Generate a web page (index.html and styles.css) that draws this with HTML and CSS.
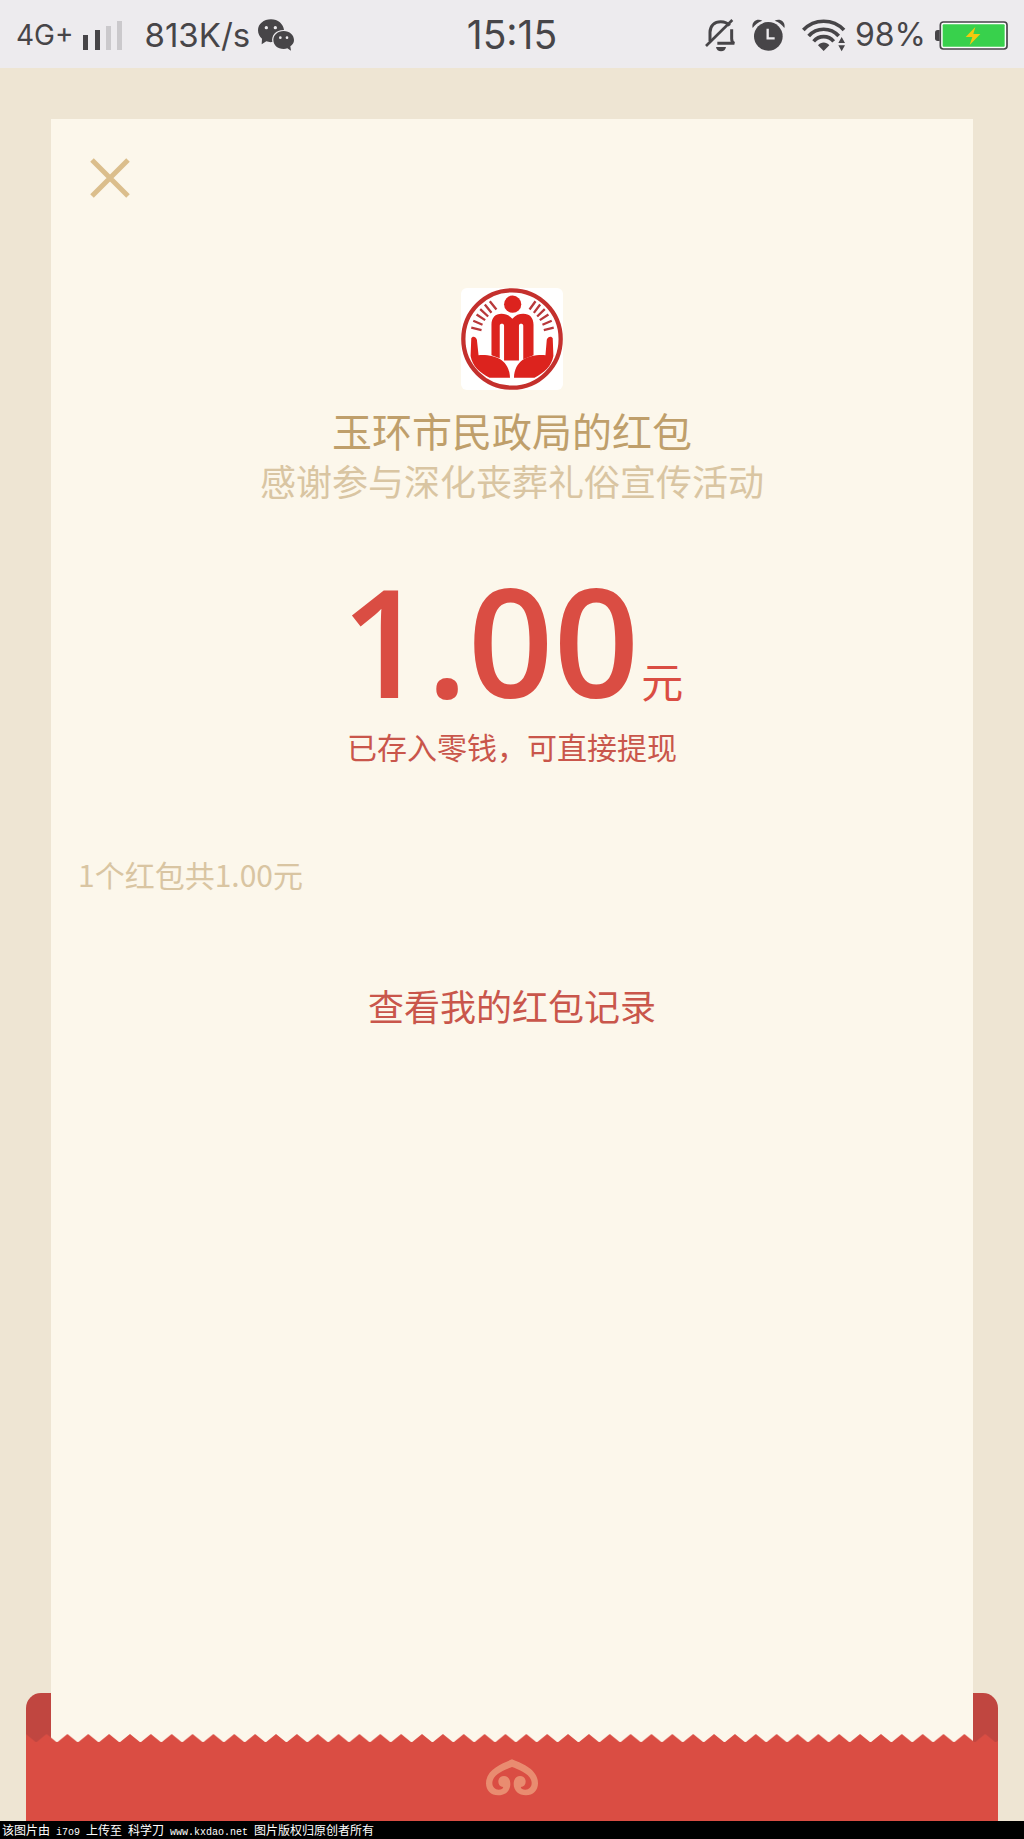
FILE: index.html
```html
<!DOCTYPE html>
<html lang="zh-CN">
<head>
    <meta charset="UTF-8">
    <meta name="viewport" content="width=device-width, initial-scale=1.0">
    <title>红包详情</title>
    <link rel="stylesheet" href="styles.css">
</head>
<body>
    <!-- Status bar -->
    <header class="status-bar">
        <div class="status-left">
            <span class="network">4G+</span>
            <svg class="signal" width="40" height="29" viewBox="0 0 40 29" aria-hidden="true">
                <path fill="#474548" d="M0 14h5v15H0zM12 9h5v20h-5z"/>
                <path fill="#cbc9cc" d="M23 5h5v24h-5zM34 0h5v29h-5z"/>
            </svg>
            <span class="speed">813K/s</span>
            <svg class="wechat" width="36" height="32" viewBox="0 0 108 96" aria-hidden="true">
                <path fill="#474548" d="M39 1C17 1 0 15 0 34c0 11 5 19 12 25l-1 17 14-9c6 2 12 3 18 2-4-20 12-37 35-36C76 15 60 1 39 1z"/>
                <path fill="#474548" d="M77 36c-18 0-31 12-31 27s13 27 31 27c4 0 8-1 11-2l11 7-2-13c7-5 11-11 11-19 0-15-13-27-31-27z"/>
                <g fill="#edebee"><circle cx="25" cy="26" r="5"/><circle cx="52" cy="26" r="5"/><circle cx="67" cy="56" r="4"/><circle cx="87" cy="56" r="4"/></g>
            </svg>
        </div>
        <time class="clock">15:15</time>
        <div class="status-right">
            <svg class="bell" width="32" height="33" viewBox="0 0 96 99" aria-hidden="true">
                <path fill="none" stroke="#474548" stroke-width="9" d="M15 66V40C15 20 29 8 47 8c12 0 21 4 27 12M80 31v28c0 8 3 12 8 14H37"/>
                <path fill="none" stroke="#474548" stroke-width="8" d="M3 81L82 3"/>
                <path fill="#474548" d="M33 84h30c-1 8-7 13-15 13s-14-5-15-13z"/>
            </svg>
            <svg class="alarm" width="33" height="33" viewBox="0 0 99 99" aria-hidden="true">
                <circle cx="49" cy="52" r="43" fill="#474548"/>
                <path fill="none" stroke="#edebee" stroke-width="7" d="M47 29v29h21"/>
                <path fill="#474548" d="M2 27C-3 8 15-4 31 5 18 9 9 17 2 27zM97 27C102 8 84-4 68 5c13 4 22 12 29 22z"/>
            </svg>
            <svg class="wifi" width="44" height="33" viewBox="0 0 132 99" aria-hidden="true">
                <g fill="none" stroke="#474548" stroke-width="11">
                    <path d="M4 33C37-2 93-2 126 33"/>
                    <path d="M20 51c24-27 66-27 90 0"/>
                    <path d="M35 67c16-19 44-19 60 0"/>
                </g>
                <path fill="#474548" d="M48 79c9-11 25-11 34 0L65 96zM109 72l10-18 10 18zM109 79h20l-10 18z"/>
            </svg>
            <span class="percent">98%</span>
            <svg class="battery" width="73" height="29" viewBox="0 0 219 87" aria-hidden="true">
                <path fill="#474548" d="M14 27H8Q0 27 0 35v17q0 8 8 8h6z"/>
                <rect x="16" y="3" width="200" height="81" rx="9" fill="#fff" stroke="#474548" stroke-width="5"/>
                <rect x="23" y="10" width="186" height="67" rx="3" fill="#38d14c"/>
                <path fill="#f5c90f" d="M121 18L92 48h20l-8 24 32-33h-21z"/>
            </svg>
        </div>
    </header>

    <!-- Red packet -->
    <main class="packet">
        <div class="packet-back"></div>
        <section class="sheet">
            <button type="button" class="close" aria-label="关闭">
                <svg width="40" height="40" viewBox="0 0 40 40" aria-hidden="true">
                    <path fill="none" stroke="#dbbe8c" stroke-width="5" d="M2 2l36 36M38 2L2 38"/>
                </svg>
            </button>

            <svg class="avatar" width="102" height="102" viewBox="62 54 308 308" role="img" aria-label="玉环市民政局">
                <rect x="62" y="54" width="308" height="308" fill="#fff"/>
                <circle cx="216" cy="208" r="147" fill="none" stroke="#c4302d" stroke-width="13"/>
                <circle cx="218" cy="103" r="26" fill="#dc231e"/>
                <path fill="#dc231e" d="M154 257V165c0-21 12-33 30-33 14 0 23 4 33 15 10-11 20-15 33-15 19 0 31 12 31 33v92l-31 12V168c0-8-13-8-13 0v105h-45V168c0-8-13-8-13 0v98z"/>
                <path fill="#dc231e" d="M93 206c3-8 14-6 17 4l5 47c50-3 93 14 95 68h-62c-30-16-52-36-57-66zM339 206c-3-8-15-6-18 4l-4 47c-50-3-93 14-95 68h62c30-16 52-36 57-66z"/>
                <path fill="none" stroke="#b8383a" stroke-width="7" d="M149 94l20 25M134 104l20 25M120 118l24 22M109 134l26 17M99 153l28 12M93 174l31 7M287 94l-18 25M301 104l-19 25M315 118l-23 22M326 134l-26 17M336 153l-28 12M342 174l-30 7"/>
            </svg>

            <h1 class="sender">玉环市民政局的红包</h1>
            <p class="greeting">感谢参与深化丧葬礼俗宣传活动</p>
            <p class="amount"><strong>1.00</strong><span class="unit">元</span></p>
            <p class="saved">已存入零钱，可直接提现</p>
            <p class="summary">1个红包共1.00元</p>
            <a class="records" href="#">查看我的红包记录</a>
        </section>

        <div class="packet-front">
            <svg class="teeth" width="100%" height="9" aria-hidden="true">
                <defs>
                    <pattern id="tooth" x="-0.3" width="20.86" height="9" patternUnits="userSpaceOnUse">
                        <path fill="#da4d43" d="M0 0L10.43 8.5 20.86 0V9H0z"/>
                    </pattern>
                </defs>
                <rect width="100%" height="9" fill="url(#tooth)"/>
            </svg>
            <div class="packet-body">
                <svg class="emblem" width="52" height="37" viewBox="0 0 156 111" aria-hidden="true">
                    <path fill="#e98c70" d="M78 1C50 13 0 30 0 73c0 22 15 36 36 36 22 0 37-14 37-34 0-15-8-24-19-24-10 0-17 7-17 17 0 9 6 15 14 16 2 4-4 8-13 8-11 0-19-8-19-20 0-26 40-41 59-48 19 7 59 22 59 48 0 12-8 20-19 20-9 0-15-4-13-8 8-1 14-7 14-16 0-10-7-17-17-17-11 0-19 9-19 24 0 20 15 34 37 34 21 0 36-14 36-36C156 30 106 13 78 1z"/>
                </svg>
            </div>
        </div>
    </main>

    <footer class="watermark">该图片由<span> i7o9 </span>上传至<span> </span>科学刀<span> www.kxdao.net </span>图片版权归原创者所有</footer>
</body>
</html>
```

FILE: styles.css
```css
* {
    box-sizing: border-box;
}

body {
    display: flex;
    flex-direction: column;
    min-height: 100vh;
    margin: 0;
    font-family: "Noto Sans CJK SC", sans-serif;
    background-color: #eee5d3;
}

svg {
    display: block;
    flex: none;
}

h1,
p {
    margin: 0;
    font-weight: 400;
}

/* status bar */
.status-bar {
    display: grid;
    grid-template-columns: 1fr auto 1fr;
    align-items: center;
    height: 68px;
    padding: 2px 16px 0;
    font-family: Inter, sans-serif;
    font-size: 33px;
    line-height: 40px;
    color: #474548;
    background-color: #edebee;
}

.status-left,
.status-right {
    display: flex;
    align-items: center;
}

.status-right {
    justify-content: flex-end;
}

.network {
    font-size: 28px;
}

.signal {
    margin: 0 22px 0 9px;
}

.wechat {
    margin-left: 8px;
}

.clock {
    font-size: 39px;
}

.alarm {
    margin: 0 17px 0 15px;
}

.percent {
    margin: 0 9px;
    font-size: 32px;
}

/* red packet */
.packet {
    position: relative;
    display: flex;
    flex: 1;
    flex-direction: column;
    padding-top: 51px;
}

.packet-back {
    position: absolute;
    right: 26px;
    bottom: 0;
    left: 26px;
    height: 128px;
    border-radius: 15px 15px 0 0;
    background-color: #c04640;
}

.sheet {
    position: relative;
    display: flex;
    flex: 1;
    flex-direction: column;
    align-items: center;
    margin: 0 51px;
    padding: 39px 27px 60px;
    background-color: #fcf7eb;
}

.close {
    align-self: flex-start;
    margin-left: 12px;
    padding: 0;
    border: none;
    background: none;
    cursor: pointer;
}

.avatar {
    margin-top: 90px;
    border-radius: 6px;
}

.sender {
    margin-top: 14px;
    font-size: 40px;
    line-height: 52px;
    color: #bf9f6b;
}

.greeting {
    font-size: 36px;
    line-height: 48px;
    color: #d9c5a2;
}

.amount {
    display: flex;
    align-items: baseline;
    margin-top: 76px;
    line-height: 120px;
    color: #da4d43;
}

.amount strong {
    font-family: "Open Sans", sans-serif;
    font-size: 150px;
    font-weight: 600;
}

.unit {
    margin-left: 2px;
    font-size: 42px;
    line-height: 42px;
}

.saved {
    margin-top: 23px;
    font-size: 30px;
    line-height: 44px;
    color: #c9564b;
}

.summary {
    align-self: flex-start;
    margin-top: 84px;
    font-size: 30px;
    line-height: 44px;
    color: #d9c5a2;
}

.records {
    margin-top: 85px;
    font-size: 36px;
    line-height: 48px;
    color: #c9564b;
    text-decoration: none;
}

.packet-front {
    position: relative;
    margin: -9px 26px 0;
}

.packet-body {
    display: flex;
    justify-content: center;
    height: 79px;
    margin-top: -1px;
    padding-top: 17px;
    background-color: #da4d43;
}

/* source line */
.watermark {
    height: 18px;
    padding-left: 2px;
    font-size: 12px;
    line-height: 17px;
    color: #fff;
    background-color: #000;
}

.watermark span {
    font-family: "Liberation Mono", monospace;
    font-size: 10px;
}
```
